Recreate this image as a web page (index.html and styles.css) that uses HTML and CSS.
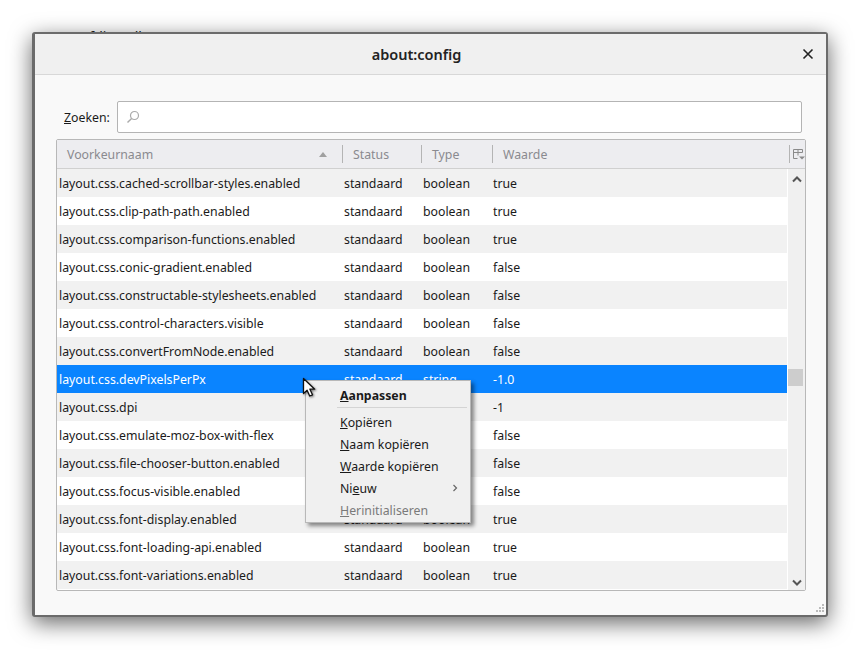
FILE: index.html
```html
<!DOCTYPE html>
<html lang="nl">
<head>
<meta charset="utf-8">
<title>about:config</title>
<link rel="stylesheet" href="styles.css">
</head>
<body>
<div class="behind behind-top">Hoofdinstellen</div>
<div class="behind behind-bottom">Hoofdmenu instellen het venster aan de rechterkant</div>
<div class="window">
  <div class="titlebar">
    <span class="title">about:config</span>
    <svg class="close" width="12" height="12" viewBox="0 0 12 12"><path d="M1.5 1.5l9 9M10.5 1.5l-9 9" stroke="#222" stroke-width="1.6" fill="none"/></svg>
  </div>
  <div class="content">
    <div class="search">
      <label class="search-label"><u>Z</u>oeken:</label>
      <div class="search-box">
        <svg width="14" height="14" viewBox="0 0 14 14"><circle cx="8.5" cy="5.5" r="4" stroke="#aaa" stroke-width="1.2" fill="none"/><path d="M5.6 8.4L1.5 12.5" stroke="#aaa" stroke-width="1.4" fill="none"/></svg>
      </div>
    </div>
    <div class="tree">
      <div class="head">
        <div class="hcol col-name"><span>Voorkeurnaam</span><i class="sort"></i></div>
        <div class="hcol col-status"><span>Status</span></div>
        <div class="hcol col-type"><span>Type</span></div>
        <div class="hcol col-value"><span>Waarde</span></div>
        <div class="hcol col-pick">
          <svg width="13" height="13" viewBox="0 0 13 13"><path d="M1.5 10.5V1.5h9v3M1.5 4.5h9M6 1.5v6M1.5 10.5h4" stroke="#8a8a8a" fill="none"/><path d="M7 8.5h6l-3 3z" fill="#8a8a8a"/></svg>
        </div>
      </div>
      <div class="body">
        <div class="rows">
          <div class="row"><span class="c-name">layout.css.cached-scrollbar-styles.enabled</span><span class="c-status">standaard</span><span class="c-type">boolean</span><span class="c-value">true</span></div>
          <div class="row"><span class="c-name">layout.css.clip-path-path.enabled</span><span class="c-status">standaard</span><span class="c-type">boolean</span><span class="c-value">true</span></div>
          <div class="row"><span class="c-name">layout.css.comparison-functions.enabled</span><span class="c-status">standaard</span><span class="c-type">boolean</span><span class="c-value">true</span></div>
          <div class="row"><span class="c-name">layout.css.conic-gradient.enabled</span><span class="c-status">standaard</span><span class="c-type">boolean</span><span class="c-value">false</span></div>
          <div class="row"><span class="c-name">layout.css.constructable-stylesheets.enabled</span><span class="c-status">standaard</span><span class="c-type">boolean</span><span class="c-value">false</span></div>
          <div class="row"><span class="c-name">layout.css.control-characters.visible</span><span class="c-status">standaard</span><span class="c-type">boolean</span><span class="c-value">false</span></div>
          <div class="row"><span class="c-name">layout.css.convertFromNode.enabled</span><span class="c-status">standaard</span><span class="c-type">boolean</span><span class="c-value">false</span></div>
          <div class="row selected"><span class="c-name">layout.css.devPixelsPerPx</span><span class="c-status">standaard</span><span class="c-type">string</span><span class="c-value">-1.0</span></div>
          <div class="row"><span class="c-name">layout.css.dpi</span><span class="c-status">standaard</span><span class="c-type">integer</span><span class="c-value">-1</span></div>
          <div class="row"><span class="c-name">layout.css.emulate-moz-box-with-flex</span><span class="c-status">standaard</span><span class="c-type">boolean</span><span class="c-value">false</span></div>
          <div class="row"><span class="c-name">layout.css.file-chooser-button.enabled</span><span class="c-status">standaard</span><span class="c-type">boolean</span><span class="c-value">false</span></div>
          <div class="row"><span class="c-name">layout.css.focus-visible.enabled</span><span class="c-status">standaard</span><span class="c-type">boolean</span><span class="c-value">false</span></div>
          <div class="row"><span class="c-name">layout.css.font-display.enabled</span><span class="c-status">standaard</span><span class="c-type">boolean</span><span class="c-value">true</span></div>
          <div class="row"><span class="c-name">layout.css.font-loading-api.enabled</span><span class="c-status">standaard</span><span class="c-type">boolean</span><span class="c-value">true</span></div>
          <div class="row"><span class="c-name">layout.css.font-variations.enabled</span><span class="c-status">standaard</span><span class="c-type">boolean</span><span class="c-value">true</span></div>
        </div>
        <div class="scrollbar">
          <svg class="arrow" width="10" height="7" viewBox="0 0 10 7"><path d="M1 5.5l4-4 4 4" stroke="#555" stroke-width="2" fill="none"/></svg>
          <div class="thumb"></div>
          <svg class="arrow" width="10" height="7" viewBox="0 0 10 7"><path d="M1 1.5l4 4 4-4" stroke="#555" stroke-width="2" fill="none"/></svg>
        </div>
      </div>
    </div>
    <svg class="grip" width="10" height="10" viewBox="0 0 10 10"><path d="M7 0h2v2H7zM4 3h2v2H4zM7 3h2v2H7zM1 6h2v2H1zM4 6h2v2H4zM7 6h2v2H7z" fill="#bbb"/></svg>
  </div>
</div>
<div class="menu">
  <div class="item strong"><span><u>A</u>anpassen</span></div>
  <div class="sep"></div>
  <div class="item"><span><u>K</u>opiëren</span></div>
  <div class="item"><span><u>N</u>aam kopiëren</span></div>
  <div class="item"><span><u>W</u>aarde kopiëren</span></div>
  <div class="item has-sub">
    <span>Ni<u>e</u>uw</span>
    <svg width="6" height="8" viewBox="0 0 6 8"><path d="M1.5 1l3 3-3 3" stroke="#666" stroke-width="1.2" fill="none"/></svg>
  </div>
  <div class="item disabled"><span><u>H</u>erinitialiseren</span></div>
</div>
<svg class="cursor" width="16" height="22" viewBox="0 0 16 22"><path d="M1.5 1.5v15l3.6-3.3 2.6 5.8 2.8-1.2-2.6-5.6h4.8z" fill="#fff" stroke="#111" stroke-width="1.3" stroke-linejoin="round"/></svg>
</body>
</html>
```
FILE: styles.css
```css
* { box-sizing: border-box; }
html, body { margin: 0; height: 100%; }
body {
  position: relative;
  width: 860px;
  height: 650px;
  overflow: hidden;
  background: #fff;
  font-family: "Noto Sans", sans-serif;
  font-size: 12.3px;
  color: #1a1a1a;
}
.behind { position: absolute; color: #222; font-size: 14px; white-space: nowrap; }
.behind-top { left: 62px; top: 27px; }
.behind-bottom { left: 225px; top: 602px; }
.window {
  position: absolute;
  left: 32px;
  top: 32px;
  width: 796px;
  height: 585px;
  display: flex;
  flex-direction: column;
  background: #f9f9f9;
  border: 2px solid #6b6b6b;
  border-left-width: 3px;
  border-radius: 3px;
  box-shadow: 0 6px 22px rgba(0,0,0,.6);
}
.titlebar {
  height: 41px;
  flex: none;
  display: flex;
  align-items: center;
  justify-content: center;
  position: relative;
  padding-right: 28px;
  background: #f0f0f0;
  border-bottom: 1px solid #d8d8d8;
}
.title { font-size: 14.5px; font-weight: 600; color: #222; }
.close { position: absolute; right: 12px; top: 14px; }
.content {
  flex: 1;
  position: relative;
  display: flex;
  flex-direction: column;
  padding: 26px 20px 0 21px;
}
.search { display: flex; align-items: center; height: 32px; margin-bottom: 6px; padding-right: 4px; }
.search-label { width: 61px; padding-left: 8px; }
.search-box {
  flex: 1;
  height: 32px;
  display: flex;
  align-items: center;
  padding-left: 8px;
  background: #fff;
  border: 1px solid #b4b4b4;
  border-radius: 2px;
}
.tree {
  height: 452px;
  display: flex;
  flex-direction: column;
  border: 1px solid #b8b8b8;
  border-radius: 2px;
  background: #fff;
}
.head {
  height: 29px;
  flex: none;
  display: flex;
  align-items: center;
  background: #ededf0;
  border-bottom: 1px solid #d0d0d0;
  color: #8a8a8f;
}
.hcol { height: 18px; display: flex; align-items: center; justify-content: space-between; }
.col-name { width: 285px; padding: 0 15px 0 10px; }
.col-status { width: 79px; padding-left: 10px; border-left: 1px solid #b4b4b4; }
.col-type { width: 71px; padding-left: 10px; border-left: 1px solid #b4b4b4; }
.col-value { flex: 1; padding-left: 10px; border-left: 1px solid #b4b4b4; }
.col-pick { width: 16px; padding-left: 2px; border-left: 1px solid #b4b4b4; }
.sort {
  width: 0; height: 0;
  border-left: 4px solid transparent;
  border-right: 4px solid transparent;
  border-bottom: 5px solid #a0a0a0;
}
.body { flex: 1; display: flex; min-height: 0; }
.rows { flex: 1; min-width: 0; }
.row { height: 28px; display: flex; align-items: center; background: #fff; white-space: nowrap; }
.row:nth-child(odd) { background: #f1f1f1; }
.row.selected { background: #0a84ff; color: #fff; }
.c-name { width: 287px; padding-left: 2px; }
.c-status { width: 79px; }
.c-type { width: 70px; }
.c-value { flex: 1; }
.scrollbar {
  width: 17px;
  flex: none;
  margin-left: 1px;
  position: relative;
  background: #f0f0f0;
  display: flex;
  flex-direction: column;
  align-items: center;
  justify-content: space-between;
  padding: 7px 0 4px;
}
.thumb {
  position: absolute;
  left: 0;
  top: 200px;
  width: 15px;
  height: 17px;
  background: #cdcdcd;
}
.grip { position: absolute; right: 1px; bottom: 1px; }
.menu {
  position: absolute;
  left: 305px;
  top: 380px;
  width: 166px;
  height: 143px;
  padding: 3px 1px;
  background: #f0f0f0;
  border: 1px solid #b8b8b8;
  box-shadow: 3px 3px 4px rgba(0,0,0,.45);
}
.item {
  height: 22px;
  padding-left: 33px;
  padding-right: 11px;
  display: flex;
  align-items: center;
  white-space: pre;
  color: #1a1a1a;
}
.item.strong { font-weight: 700; }
.has-sub { justify-content: space-between; }
.disabled { color: #7a7a7a; }
.sep { height: 1px; margin: 1px 2px 3px 30px; background: #d4d4d4; }
.cursor {
  position: absolute;
  left: 302px;
  top: 377px;
  filter: drop-shadow(1px 1px 1px rgba(0,0,0,.5));
}
```
